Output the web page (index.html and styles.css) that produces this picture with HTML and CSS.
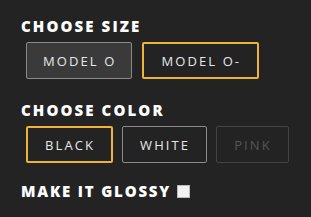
FILE: index.html
```html
<!DOCTYPE html>
<html>
<head>
<meta charset="utf-8">
<link rel="stylesheet" href="styles.css">
</head>
<body>
<div class="panel">
  <h2 class="label">CHOOSE SIZE</h2>
  <div class="options">
    <button class="opt opt-filled">MODEL O</button>
    <button class="opt opt-selected">MODEL O-</button>
  </div>
  <h2 class="label">CHOOSE COLOR</h2>
  <div class="options options-last">
    <button class="opt opt-selected">BLACK</button>
    <button class="opt">WHITE</button>
    <button class="opt opt-disabled">PINK</button>
  </div>
  <h2 class="label glossy">MAKE IT GLOSSY <span class="check"></span></h2>
</div>
</body>
</html>
```
FILE: styles.css
```css
html, body {
  margin: 0;
  background: #232323;
}
.panel {
  padding: 17px 0 0 21px;
  font-family: "Open Sans", "DejaVu Sans", sans-serif;
}
.label {
  margin: 0;
  color: #ffffff;
  font-size: 15px;
  font-weight: 800;
  letter-spacing: 2.1px;
  line-height: 18px;
  display: flex;
  align-items: center;
}
.glossy {
  letter-spacing: 1.8px;
}
.options {
  display: flex;
  gap: 10px;
  margin: 7px 0 22px 5px;
}
.options-last {
  gap: 9px;
  margin-bottom: 19px;
}
.opt {
  height: 37px;
  padding: 0 16px 0 17px;
  border: 1px solid #8a8a8a;
  border-radius: 2px;
  background: #232323;
  color: #e8e8e8;
  font-family: inherit;
  font-size: 13px;
  font-weight: 500;
  letter-spacing: 2.1px;
}
.opt-filled {
  background: #3a3a3a;
  padding: 0 15px 0 16px;
}
.opt-selected {
  border: 2px solid #f0b23c;
}
.opt-disabled {
  color: #555;
  border-color: #444;
}
.check {
  display: inline-block;
  width: 13px;
  height: 13px;
  margin-left: 6px;
  background: #f2f2f2;
  border: 1px solid #bbb;
  box-sizing: border-box;
}
```
